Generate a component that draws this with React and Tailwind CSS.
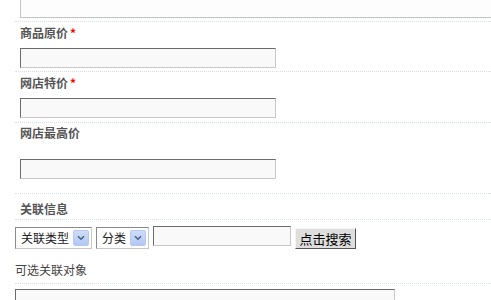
const font = { fontFamily: '"Noto Sans CJK SC", "Liberation Sans", sans-serif' };

function Field({ className = "", wide = false }) {
  return (
    <div
      className={`h-[20px] ${wide ? "w-[380px]" : "w-[256px]"} bg-[#f9f9f9] border border-t-[#6b6b6b] border-l-[#6b6b6b] border-b-[#c8c8c8] border-r-[#c8c8c8] ${className}`}
    />
  );
}

function Label({ children, required }) {
  return (
    <div className="h-[16px] leading-[16px] pl-[5px] text-[12px] font-bold text-[#555]">
      {children}
      {required && <span className="text-[#ff0000] ml-[2px]">*</span>}
    </div>
  );
}

function Select({ text, width }) {
  return (
    <div
      className={`${width} h-[22px] flex items-center justify-between pl-[5px] pr-[2px] bg-white border border-t-[#8a8a8a] border-l-[#8a8a8a] border-b-[#c8c8c8] border-r-[#c8c8c8]`}
    >
      <span className="text-[12px] leading-[16px] text-[#222]">{text}</span>
      <span className="w-[16px] h-[16px] flex items-center justify-center rounded-[2px] bg-gradient-to-b from-[#cfdcfb] to-[#b3c8f5] border border-[#b4c8f2]">
        <svg width="8" height="6" viewBox="0 0 8 6">
          <path d="M1 1.2 L4 4.2 L7 1.2" fill="none" stroke="#4d6185" strokeWidth="1.6" />
        </svg>
      </span>
    </div>
  );
}

export default function App() {
  return (
    <div className="w-[491px] h-[300px] overflow-hidden bg-white" style={font}>
      <div className="ml-[15px]">
        {/* top textarea tail */}
        <div className="h-[22px] border-b border-dotted border-[#d5dfe8]">
          <div className="ml-[5px] h-[18px] w-[600px] bg-[#fdfdfd] border-l border-b border-[#c4c4c4]" />
        </div>

        <div className="pt-[3px] pb-[3px] border-b border-dotted border-[#d5dfe8]">
          <Label required>商品原价</Label>
          <Field className="mt-[7px] ml-[5px]" />
        </div>

        <div className="pt-[3px] pb-[4px] border-b border-dotted border-[#d5dfe8]">
          <Label required>网店特价</Label>
          <Field className="mt-[7px] ml-[5px]" />
        </div>

        <div className="pt-[2px] pb-[14px] border-b border-dotted border-[#d5dfe8]">
          <Label>网店最高价</Label>
          <Field className="mt-[18px] ml-[5px]" />
        </div>

        <div className="pt-[7px] pb-[2px] border-b border-dotted border-[#d5dfe8]">
          <Label>关联信息</Label>
        </div>

        <div className="pt-[6px] pb-[5px] border-b border-dotted border-[#d5dfe8]">
          <div className="flex items-start">
            <div className="mt-[1px]">
              <Select text="关联类型" width="w-[77px]" />
            </div>
            <div className="mt-[1px] ml-[4px]">
              <Select text="分类" width="w-[53px]" />
            </div>
            <Field className="ml-[4px] !w-[138px]" />
            <button className="mt-[2px] ml-[4px] w-[61px] h-[21px] bg-[#dedede] text-[13px] leading-[16px] text-black border border-t-[#f4f4f4] border-l-[#f4f4f4] border-b-[#555] border-r-[#555]">
              点击搜索
            </button>
          </div>
          <div className="mt-[13px] h-[16px] leading-[16px] text-[12px] text-[#444]">可选关联对象</div>
        </div>

        <Field wide className="mt-[5px] h-[40px]" />
      </div>
    </div>
  );
}
